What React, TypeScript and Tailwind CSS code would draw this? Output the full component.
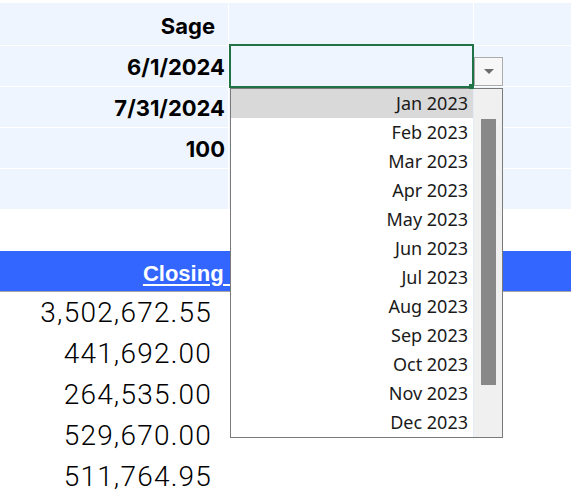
import React from "react";

const params = [
  { label: "Sage", pad: "pr-[13px]", h: "h-[42px]" },
  { label: "6/1/2024", pad: "pr-[3px]", h: "h-[40px]" },
  { label: "7/31/2024", pad: "pr-[3px]", h: "h-[40px]" },
  { label: "100", pad: "pr-[3px]", h: "h-[40px]" },
  { label: "", pad: "pr-[3px]", h: "h-[40px]" },
];

const balances = ["3,502,672.55", "441,692.00", "264,535.00", "529,670.00", "511,764.95"];

const months = [
  "Jan 2023", "Feb 2023", "Mar 2023", "Apr 2023", "May 2023", "Jun 2023",
  "Jul 2023", "Aug 2023", "Sep 2023", "Oct 2023", "Nov 2023", "Dec 2023",
];

function MonthList() {
  return (
    <div className="absolute left-[230px] top-[88px] z-20 flex h-[350px] w-[273px] border border-[#7a7a7a] bg-white">
      <div className="flex w-[242px] flex-col">
        {months.map((m, i) => (
          <div
            key={m}
            className={`flex h-[29px] items-center justify-end pr-[5px] text-[18px] text-[#1a1a1a] ${
              i === 0 ? "bg-[#d9d9d9]" : ""
            }`}
            style={{ fontFamily: '"Noto Sans", "Open Sans", sans-serif' }}
          >
            {m}
          </div>
        ))}
      </div>
      <div className="relative flex-1 border-l border-[#e3ecf8] bg-[#f0f0f0]">
        <div className="absolute left-[7px] top-[30px] h-[266px] w-[15px] bg-[#888888]" />
      </div>
    </div>
  );
}

export default function App() {
  return (
    <div
      className="relative h-[493px] w-[571px] overflow-hidden bg-white"
      style={{ fontFamily: '"Liberation Sans", Arial, sans-serif' }}
    >
      <div className="pt-[3px]">
        <div className="flex flex-col gap-px bg-white">
          {params.map((p, i) => (
            <div key={i} className={`grid grid-cols-[228px_244px_1fr] gap-px ${p.h}`}>
              <div
                className={`flex items-end justify-end bg-[#eef5ff] pb-[2px] text-[22px] font-bold text-black ${p.pad}`}
                style={{ fontFamily: "Inter, sans-serif" }}
              >
                {p.label}
              </div>
              <div className="bg-[#eef5ff]" />
              <div className="bg-[#eef5ff]" />
            </div>
          ))}
        </div>
      </div>

      <div className="h-[42px]" />

      <div className="flex h-[41px] items-center border-b border-[#a6a6a6] bg-[#3366ff] pt-[4px]">
        <div className="w-[473px] pr-[16px] text-center text-[22px] font-bold text-white underline decoration-2 underline-offset-[3px]">
          Closing Balance
        </div>
      </div>

      <div className="flex flex-col">
        {balances.map((b) => (
          <div
            key={b}
            className="flex h-[41px] w-[228px] items-center justify-end pr-[16px] text-[28px] font-light tracking-[1.2px] text-black"
            style={{ fontFamily: "Roboto, sans-serif" }}
          >
            {b}
          </div>
        ))}
      </div>

      {/* selected cell */}
      <div className="pointer-events-none absolute left-[229px] top-[44px] z-10 h-[44px] w-[245px] border-2 border-[#217346]" />
      <div className="absolute left-[469px] top-[84px] z-30 h-[5px] w-[5px] bg-[#217346]" />

      {/* validation dropdown button */}
      <div className="absolute left-[474px] top-[57px] z-20 flex h-[29px] w-[29px] items-center justify-center border border-[#ababab] bg-[#f7f7f7]">
        <svg width="10" height="6" viewBox="0 0 10 6">
          <path d="M0 0 H10 L5 5 Z" fill="#6d6d6d" />
        </svg>
      </div>

      <MonthList />
    </div>
  );
}
